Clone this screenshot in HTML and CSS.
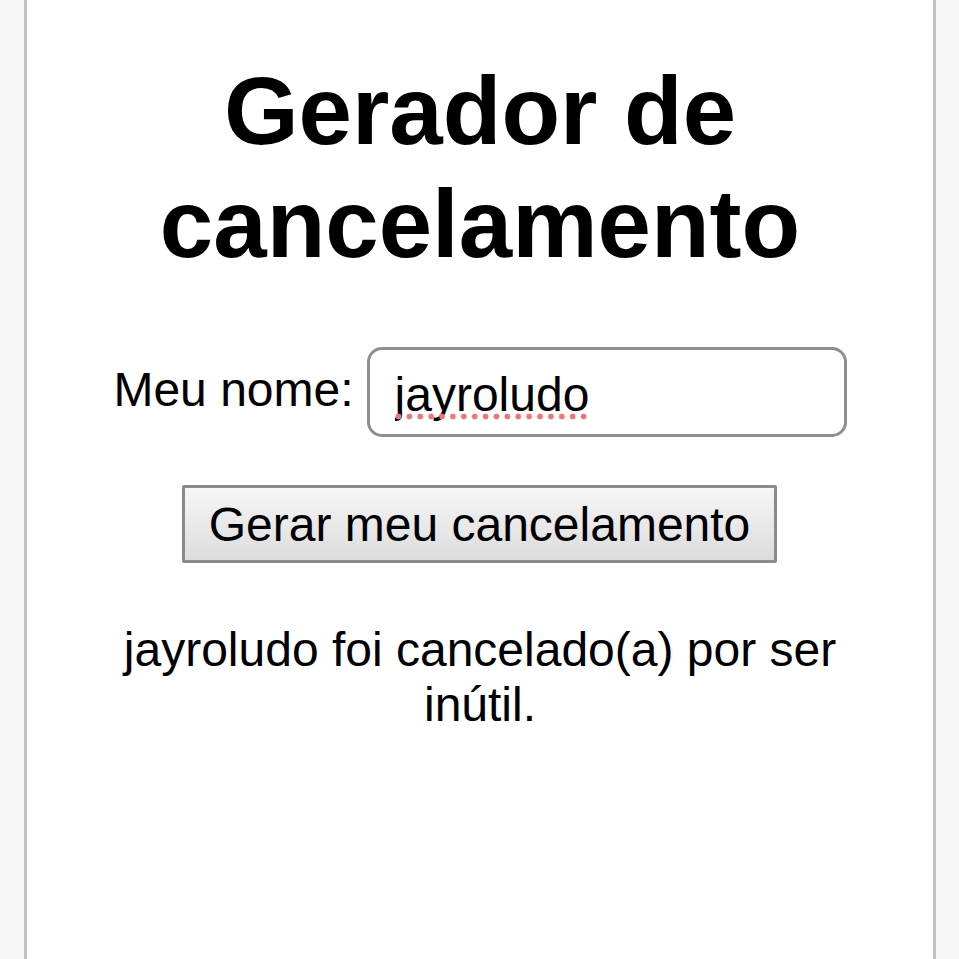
FILE: index.html
```html
<html>

<head>

<title>Gerador de cancelamento</title>

<link rel="stylesheet" href="styles.css">

</head>

<body>

<div class="page">

<h1>Gerador de cancelamento</h1>

<div class="name-row">
  <label class="name-label" for="nome">Meu nome:</label>
  <span class="field">
    <input id="nome" class="name-input" type="text" value="jayroludo" spellcheck="false">
    <span class="spell-dots"></span>
  </span>
</div>

<div class="button-row">
  <button class="generate" type="button">Gerar meu cancelamento</button>
</div>

<p class="result">jayroludo foi cancelado(a) por ser inútil.</p>

</div>

</body>

</html>
```

FILE: styles.css
```css
html, body {
   margin: 0;
   height: 100%;
   background: #f5f5f5; }

body {
   font-family: "Liberation Sans", Arial, Helvetica, sans-serif;
   color: #000; }

.page {
   box-sizing: border-box;
   width: 912px;
   min-height: 100%;
   margin-left: 24px;
   background: #fff;
   border-left: 3px solid #c2c2c2;
   border-right: 3px solid #c2c2c2;
   overflow: hidden; }

h1 {
   margin: 54px 0 67px;
   font-size: 96px;
   font-weight: bold;
   line-height: 113px;
   text-align: center; }

.name-row {
   display: flex;
   justify-content: center;
   align-items: flex-start;
   gap: 13px; }

.name-label {
   margin-top: 15px;
   font-size: 48px;
   line-height: 55px; }

.field {
   position: relative;
   display: block; }

.name-input {
   display: block;
   box-sizing: border-box;
   width: 480px;
   height: 90px;
   margin: 0;
   padding: 4px 25px 0;
   border: 3px solid #8e8e8e;
   border-radius: 15px;
   background: #fff;
   font-family: inherit;
   font-size: 48px;
   color: #000;
   outline: none; }

.spell-dots {
   position: absolute;
   left: 26px;
   top: 66px;
   width: 196px;
   height: 7px;
   background-image: radial-gradient(circle, #e87777 2.7px, transparent 3.2px);
   background-size: 10.9px 7px;
   background-repeat: repeat-x; }

.button-row {
   display: flex;
   justify-content: center;
   margin-top: 48px; }

.generate {
   box-sizing: border-box;
   width: 595px;
   height: 78px;
   margin: 0 0 0 -1px;
   padding: 0;
   border: 3px solid #8b8b8b;
   border-radius: 2px;
   background: linear-gradient(#f6f6f6, #dcdcdc);
   font-family: inherit;
   font-size: 48px;
   color: #000; }

.result {
   margin: 59px 0 0;
   padding: 0 60px;
   font-size: 48px;
   line-height: 55px;
   text-align: center; }
```
